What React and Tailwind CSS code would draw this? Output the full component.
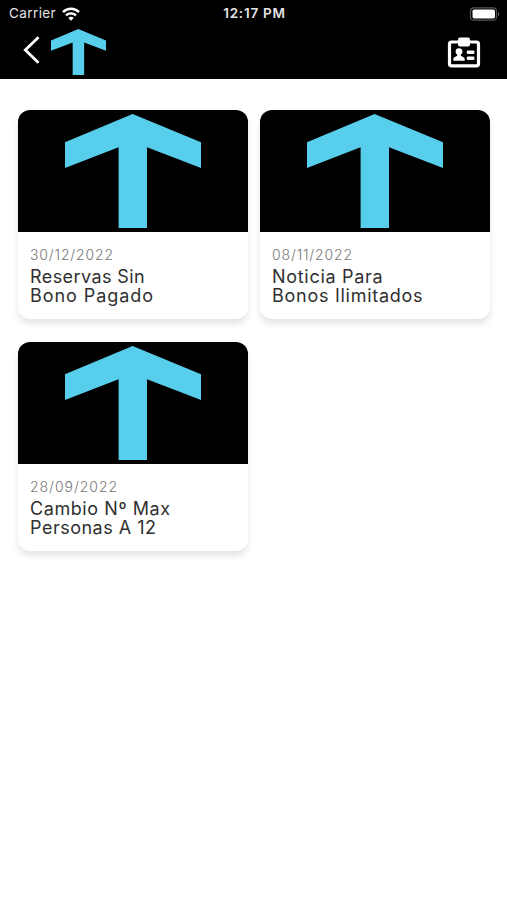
const news = [
  { id: 1, date: '30/12/2022', dateClass: 'tracking-[0.85px]', lines: [['Reservas Sin', 'tracking-[0.42px]'], ['Bono Pagado', 'tracking-[0.95px]']] },
  { id: 2, date: '08/11/2022', dateClass: 'tracking-[0.85px]', lines: [['Noticia Para', 'tracking-[0.7px]'], ['Bonos Ilimitados', 'tracking-[0.73px]']] },
  { id: 3, date: '28/09/2022', dateClass: 'tracking-[0.97px]', lines: [['Cambio Nº Max', 'tracking-[0.57px]'], ['Personas A 12', 'tracking-[0.5px]']] },
];

function Arrow({ className }) {
  return (
    <svg viewBox="0 0 136 115" preserveAspectRatio="none" className={className} fill="#58ceed">
      <path d="M67.6 0 136 28.5V54.5L82 33.5V115H53.6V33.5L0 54.5V28.5Z" />
    </svg>
  );
}

function StatusBar() {
  return (
    <div className="grid h-[27px] grid-cols-3 items-center pl-[9px] pr-[7px] text-[#e4e4e4]">
      <div className="flex items-center gap-[6px]">
        <span className="text-[13.5px] tracking-[0.4px]">Carrier</span>
        <svg viewBox="0 0 18 14" className="h-[14px] w-[18px]" fill="none" stroke="#fff" strokeWidth="2.4">
          <path d="M1 5.1C5.5.7 12.5.7 17 5.1" />
          <path d="M4 8.4c2.8-2.7 7.2-2.7 10 0" />
          <path d="M6.3 10.9c1.5-1.5 3.9-1.5 5.4 0L9 13.7Z" fill="#fff" stroke="none" />
        </svg>
      </div>
      <span className="text-center text-[13.5px] font-semibold tracking-[0.75px]">12:17 PM</span>
      <svg viewBox="0 0 31 14" className="h-[14px] w-[31px] justify-self-end">
        <rect x="1.5" y="0.8" width="26" height="12.4" rx="3.5" fill="none" stroke="#555" strokeWidth="1.2" />
        <rect x="3.5" y="2.5" width="22.5" height="9" rx="1.8" fill="#fff" />
        <path d="M29 5v4c1.7-.5 1.7-3.5 0-4Z" fill="#666" />
      </svg>
    </div>
  );
}

function Header() {
  return (
    <header className="h-[79px] bg-black">
      <StatusBar />
      <div className="flex h-[52px] items-start pl-[23px] pr-[26px]">
        <svg viewBox="0 0 17 28" className="mt-[9px] h-[28px] w-[17px]" fill="none" stroke="#fff" strokeWidth="2.8">
          <path d="M15.5 1.2 2.3 14l13.2 12.8" />
        </svg>
        <Arrow className="ml-[11px] mt-[2px] h-[46px] w-[55px]" />
        <svg viewBox="0 0 34 32" className="ml-auto mt-[10px] h-[32px] w-[34px]" fill="#fff">
          <rect x="2.5" y="5" width="29" height="23.8" rx="2" fill="none" stroke="#fff" strokeWidth="3.2" />
          <rect x="11" y="0.5" width="12" height="9" rx="2" />
          <circle cx="12" cy="14.6" r="3.4" />
          <path d="M10.2 16h3.6v2.8l3.2 1.7q.8.5.8 3.2H6.2q0-2.7.8-3.2L10.2 18.8Z" />
          <rect x="19.8" y="13.4" width="7.6" height="3.6" rx="1.2" />
          <rect x="19.8" y="19.4" width="7.6" height="3.6" rx="1.2" />
        </svg>
      </div>
    </header>
  );
}

function NewsCard({ item }) {
  return (
    <article className="h-[209px] overflow-hidden rounded-[12px] bg-white shadow-[0_5px_6px_rgba(0,0,0,0.1)]">
      <div className="flex h-[122px] justify-center bg-black pt-[4px]">
        <Arrow className="h-[114px] w-[136px]" />
      </div>
      <div className="pl-[12px] pt-[14px]">
        <p className={`text-[14px] font-light leading-[18px] text-[#777] ${item.dateClass}`}>{item.date}</p>
        <h2 className="mt-[4px] text-[18px] font-normal leading-[18.5px] text-[#303030]">
          {item.lines.map(([text, tracking]) => (
            <span key={text} className={`block whitespace-nowrap ${tracking}`}>{text}</span>
          ))}
        </h2>
      </div>
    </article>
  );
}

export default function App() {
  return (
    <div className="h-[900px] w-[507px] overflow-hidden bg-white font-['Inter','Liberation_Sans',sans-serif]">
      <Header />
      <main className="grid grid-cols-[230px_230px] gap-x-[12px] gap-y-[23px] pl-[18px] pt-[31px]">
        {news.map(item => <NewsCard key={item.id} item={item} />)}
      </main>
    </div>
  );
}
